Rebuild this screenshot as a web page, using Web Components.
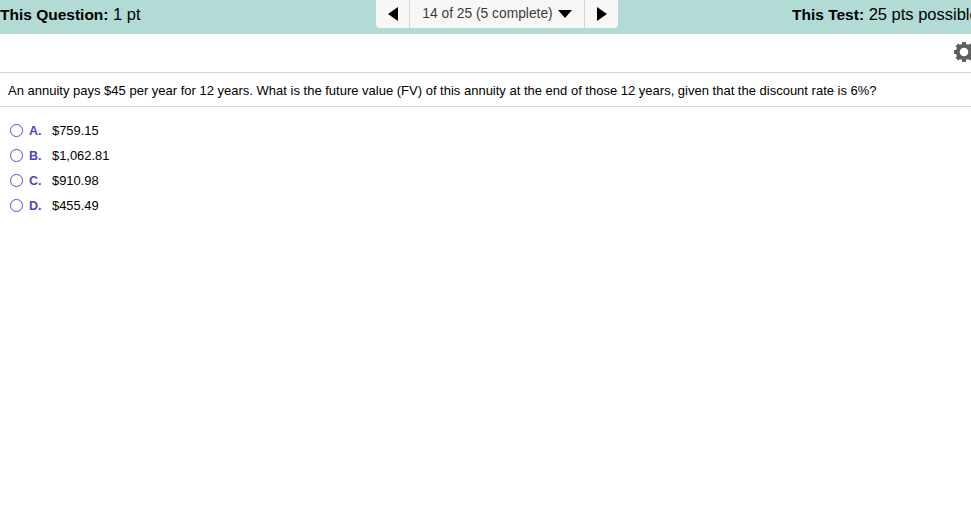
<!DOCTYPE html>
<html lang="en"><head><meta charset="utf-8"><title>Question</title>
<style>html,body{margin:0;padding:0;background:#fff;overflow:hidden}body{width:971px;height:527px;font-family:"Liberation Sans",Arial,sans-serif;color:#000}</style>
</head><body>
<test-header></test-header>
<tool-bar></tool-bar>
<question-stem>An annuity pays $45 per year for 12 years. What is the future value (FV) of this annuity at the end of those 12 years, given that the discount rate is 6%?</question-stem>
<answer-list>
<answer-option letter="A.">$759.15</answer-option>
<answer-option letter="B.">$1,062.81</answer-option>
<answer-option letter="C.">$910.98</answer-option>
<answer-option letter="D.">$455.49</answer-option>
</answer-list>
<script>
function def(name,html,init){customElements.define(name,class extends HTMLElement{constructor(){super();this.attachShadow({mode:'open'}).innerHTML=html;}connectedCallback(){init&&init(this)}})}
def('test-header',`<style>
:host{display:grid;grid-template-columns:376px 242px 1fr;height:34px;background:#b2dbd6;font-size:16.5px;line-height:28px;overflow:hidden;white-space:nowrap}
b{font-weight:700;font-size:15.5px}
.r{padding-left:174px;overflow:hidden}
.nav{display:flex;height:28px;background:#f7f7f7;border-radius:0 0 4px 4px;color:#3c3c3c;font-size:13.8px;line-height:28px}
.nav>div{display:flex;align-items:center;justify-content:center}
.p{width:33px;border-right:1px solid #d4d4d4}.n{width:33px;border-left:1px solid #d4d4d4}
.m{flex:1;gap:5px}
svg{display:block}
</style>
<div class="l"><b>This Question:</b> 1 pt</div>
<div class="nav"><div class="p"><svg width="10" height="14"><path d="M10 0V14L0 7Z"/></svg></div><div class="m"><span>14 of 25 (5 complete)</span><svg width="14" height="8"><path d="M0 0H14L7 8Z"/></svg></div><div class="n"><svg width="10" height="14"><path d="M0 0V14L10 7Z"/></svg></div></div>
<div class="r"><b>This Test:</b> 25 pts possible</div>`);
def('tool-bar',`<style>:host{display:flex;justify-content:flex-end;height:38px;border-bottom:1px solid #cfd3e3;box-sizing:content-box;overflow:hidden}svg{margin:8px -3px 0 0;flex:none}</style>
<svg width="20" height="20" viewBox="-10 -10 20 20" fill="#5f5f5f"><circle r="6.3" fill="none" stroke="#5f5f5f" stroke-width="4"/><g><rect x="-2" y="-10" width="4" height="4"/><rect x="-2" y="6" width="4" height="4"/><rect x="-2" y="-10" width="4" height="4" transform="rotate(90)"/><rect x="-2" y="6" width="4" height="4" transform="rotate(90)"/><rect x="-2" y="-10" width="4" height="4" transform="rotate(45)"/><rect x="-2" y="6" width="4" height="4" transform="rotate(45)"/><rect x="-2" y="-10" width="4" height="4" transform="rotate(135)"/><rect x="-2" y="6" width="4" height="4" transform="rotate(135)"/></g></svg>`);
def('question-stem',`<style>:host{display:block;height:33px;padding-left:8px;border-bottom:1px solid #d6d8e2;font-size:13px;line-height:36px;white-space:nowrap}</style><slot></slot>`);
def('answer-list',`<style>:host{display:block;padding:11px 0 0 10px}</style><slot></slot>`);
def('answer-option',`<style>:host{display:flex;align-items:center;height:25px;font-size:12.9px}
.c{width:10.6px;height:10.6px;border:1.5px solid #5b4fc9;border-radius:50%;box-sizing:content-box;margin-right:6.4px;background:#fff}
.k{width:23px;font-weight:700;color:#4f43bf;font-size:12.5px}
</style><span class="c"></span><span class="k"></span><span><slot></slot></span>`,el=>{el.shadowRoot.querySelector('.k').textContent=el.getAttribute('letter')});
</script>
</body></html>
